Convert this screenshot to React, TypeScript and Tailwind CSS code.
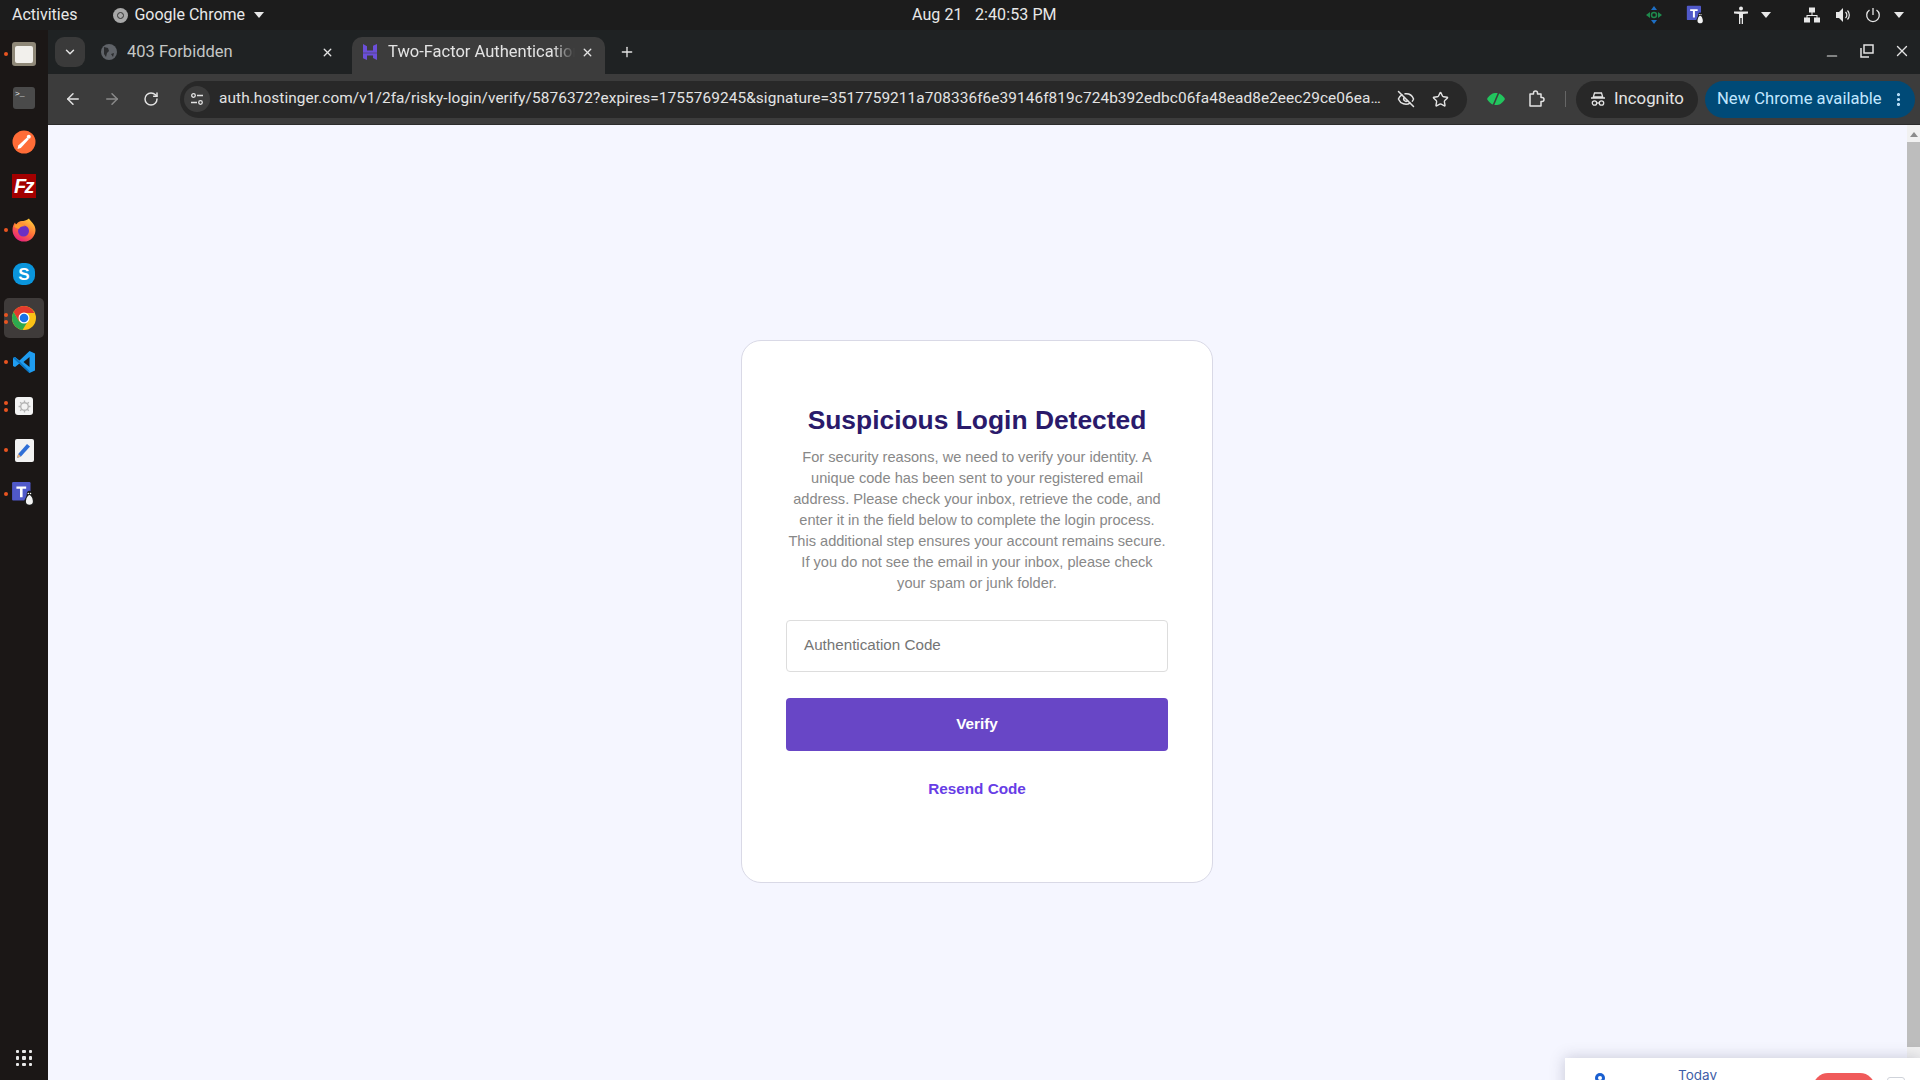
import { ArrowLeft, ArrowRight, ChevronDown, EllipsisVertical, EyeOff, Minus, Plus, RotateCw, Star, X } from "lucide-react";

const ui = "font-['Roboto','Noto_Sans',sans-serif]";

const Caret = ({ className = "" }: { className?: string }) => (
  <span className={`inline-block w-0 h-0 border-x-[5px] border-x-transparent border-t-[6px] border-t-[#e8e8e8] ${className}`} />
);

const HostingerLogo = ({ size = 16 }: { size?: number }) => (
  <svg width={size} height={size} viewBox="0 0 16 16">
    <path d="M1 0l4 2.200V6.400L1 6.400zM11 1.800L15 0v6.400l-4 .4z M1 9.200h14V16l-4-2v-2.400H5V16l-4-1.800z M1 6.400h14v2.400H1z" fill="#6b4fd8" />
  </svg>
);

const TeamsIcon = ({ size = 22 }: { size?: number }) => (
  <svg width={size} height={size} viewBox="0 0 24 24">
    <rect x="1" y="1" width="17" height="17" rx="1" fill="#5059c9" />
    <path d="M5 5h9v2.200h-3.300V15H8.300V7.200H5z" fill="#fff" />
    <path d="M17 9c-2 0-2.600 1.800-2.500 3.600.1 1.400-2.500 4.600-2.500 7 0 1.600 1.400 3 2.800 3h4.600c1.400 0 2.600-1.400 2.600-3 0-2.400-2.400-5.400-2.400-7C19.600 10.800 19 9 17 9z" fill="#1d1d1d" />
    <path d="M17 13c-1.600 0-3.200 3.600-3.200 6.200 0 1.800 1.400 2.800 3.200 2.800s3.200-1 3.200-2.800C20.200 16.600 18.600 13 17 13z" fill="#f4f4f4" />
    <circle cx="16" cy="11.500" r=".7" fill="#fff" />
    <circle cx="18" cy="11.500" r=".7" fill="#fff" />
  </svg>
);

const dockApps = [
  {
    dots: 1,
    icon: (
      <div className="w-[24px] h-[24px] rounded-[3px] bg-[#8f8878] flex items-center justify-center">
        <div className="w-[18px] h-[17px] rounded-[2px] bg-[#f2f0ec]" />
      </div>
    ),
  },
  {
    dots: 0,
    icon: (
      <div className="w-[22px] h-[22px] rounded-[3px] bg-[#4a4a4a] text-[#f0f0f0] text-[8px] leading-[8px] pl-[2px] pt-[3px] font-['Liberation_Mono',monospace]">
        &gt;_
      </div>
    ),
  },
  {
    dots: 0,
    icon: (
      <svg width="24" height="24" viewBox="0 0 24 24">
        <circle cx="12" cy="12" r="11.500" fill="#ff6c37" />
        <path d="M5.500 19l.8-3.500 8.700-8 1.800 1.800-8 8.700z" fill="#fff" />
        <circle cx="16.800" cy="6.800" r="2" fill="#fff" />
      </svg>
    ),
  },
  {
    dots: 0,
    icon: (
      <div className="w-[24px] h-[24px] bg-[#a30000] flex items-center justify-center text-white font-bold italic text-[20px] leading-none tracking-[-1.500px] pr-[1px] font-['Liberation_Sans',sans-serif]">
        Fz
      </div>
    ),
  },
  {
    dots: 1,
    icon: (
      <svg width="24" height="24" viewBox="0 0 24 24">
        <defs>
          <linearGradient id="ff" x1="0.800" y1="0" x2="0.200" y2="1">
            <stop offset="0" stopColor="#ffd23a" />
            <stop offset="0.500" stopColor="#ff7139" />
            <stop offset="1" stopColor="#e31587" />
          </linearGradient>
        </defs>
        <path d="M17 .5c1 2.500 6.500 5.500 6.500 11.500A11.500 11.500 0 0 1 .5 12C.5 9 1.500 6 3 4.500c.3 1 .7 1.500 1.300 2C5.500 4.500 7.500 3 10 3c1.500 0 4.500-.5 7-2.500z" fill="url(#ff)" />
        <circle cx="11.500" cy="13" r="5.500" fill="#6a2fc4" />
        <path d="M2 8c3-3 8-3 11 .5-3-.5-5 .5-6 2.500-2-.5-4-1-5-3z" fill="#ff9a2e" />
      </svg>
    ),
  },
  {
    dots: 0,
    icon: (
      <div className="w-[22px] h-[22px] rounded-[9px] bg-[#0a95dc] flex items-center justify-center text-white font-bold text-[17px] leading-none font-['Liberation_Sans',sans-serif]">
        S
      </div>
    ),
  },
  {
    dots: 2,
    active: true,
    icon: (
      <svg width="24" height="24" viewBox="0 0 24 24">
        <circle cx="12" cy="12" r="12" fill="#fbc116" />
        <path d="M12 0a12 12 0 0 0-10.400 6L7 15.500 12 7h10.400A12 12 0 0 0 12 0z" fill="#e33b2e" />
        <path d="M1.600 6A12 12 0 0 0 10.500 23.900L16 15l-1-1-8 1.500z" fill="#2da94f" />
        <circle cx="12" cy="12" r="5.500" fill="#fff" />
        <circle cx="12" cy="12" r="4.300" fill="#1a73e8" />
      </svg>
    ),
  },
  {
    dots: 1,
    icon: (
      <svg width="24" height="24" viewBox="0 0 24 24">
        <path d="M17.500 1L23 3.500v17L17.500 23 7.500 13.500 3 17l-2-1V8l2-1 4.500 3.500z" fill="#1f9cf0" />
        <path d="M17.500 7l-6 5 6 5z" fill="#1b1716" />
        <path d="M1 8l2-1 14.500 14L17.500 23 13 19z" fill="#0b76c4" />
      </svg>
    ),
  },
  {
    dots: 2,
    icon: (
      <div className="w-[18px] h-[18px] rounded-[3px] bg-[#f3f3f3] flex items-center justify-center">
        <svg width="13" height="13" viewBox="0 0 24 24" fill="none" stroke="#b5b5b5" strokeWidth="2.500">
          <circle cx="12" cy="12" r="7" />
          <path d="M12 1v4M12 19v4M1 12h4M19 12h4M4 4l3 3M17 17l3 3M20 4l-3 3M7 17l-3 3" />
        </svg>
      </div>
    ),
  },
  {
    dots: 1,
    icon: (
      <div className="w-[19px] h-[23px] rounded-[2px] bg-[#f2f2f2] flex items-center justify-center">
        <svg width="16" height="18" viewBox="0 0 16 18">
          <path d="M1 17l1.200-4L11 3l3 2.600L5 15.600z" fill="#2f6fd6" />
          <path d="M1 17l1.200-4 2.800 2.600z" fill="#e8b27a" />
        </svg>
      </div>
    ),
  },
  { dots: 1, icon: <TeamsIcon size={26} /> },
];

const Dock = () => (
  <aside className="w-[48px] shrink-0 bg-[#1b1716] flex flex-col items-center pt-[2px] pb-[4px]">
    {dockApps.map((app, i) => (
      <div key={i} className="relative w-[48px] h-[44px] flex items-center justify-center">
        {app.active && <div className="absolute left-[4px] top-[2px] w-[40px] h-[40px] rounded-[5px] bg-[#3f3b3a]" />}
        <div className="absolute left-[4px] top-0 h-full flex flex-col justify-center gap-[3px]">
          {Array.from({ length: app.dots }).map((_, d) => (
            <span key={d} className="block w-[4px] h-[4px] rounded-full bg-[#e95420]" />
          ))}
        </div>
        <div className="relative">{app.icon}</div>
      </div>
    ))}
    <div className="mt-auto h-[36px] flex items-center justify-center">
      <div className="grid grid-cols-3 gap-[3px]">
        {Array.from({ length: 9 }).map((_, i) => (
          <span key={i} className="block w-[3.500px] h-[3.500px] bg-[#e8e8e8] rounded-[1px]" />
        ))}
      </div>
    </div>
  </aside>
);

const TopBar = () => (
  <header className={`h-[30px] shrink-0 bg-[#1c1c1c] text-[#e8e8e8] text-[16px] flex items-center relative ${ui}`}>
    <span className="ml-[12px]">Activities</span>
    <span className="ml-[36px] flex items-center gap-[6px]">
      <span className="w-[15px] h-[15px] rounded-full bg-[#a8a8a8] flex items-center justify-center">
        <span className="w-[7px] h-[7px] rounded-full border border-[#333]" />
      </span>
      Google Chrome
      <Caret className="ml-[3px]" />
    </span>
    <span className="absolute left-[912px] top-[6px] leading-[18px] tracking-[0.1px] whitespace-pre">Aug 21   2:40:53 PM</span>
    <div className="ml-auto flex items-center">
      <svg width="16" height="18" viewBox="0 0 16 18" className="mr-[24px]">
        <path d="M8 0l3 4H5zM8 18l-3-4h6z" fill="#1e6fc4" />
        <path d="M0 9l4-3v6zM16 9l-4-3v6z" fill="#1f8a4c" />
        <circle cx="8" cy="9" r="2.500" fill="none" stroke="#1f8a4c" strokeWidth="1.500" />
      </svg>
      <TeamsIcon size={20} />
      <svg width="14" height="18" viewBox="0 0 14 18" className="ml-[28px]" fill="#e8e8e8">
        <circle cx="7" cy="2.500" r="2" />
        <path d="M0 5.500h14V7.500L9 8v10H7.700v-6H6.300v6H5V8L0 7.500z" />
      </svg>
      <Caret className="ml-[13px]" />
      <svg width="16" height="16" viewBox="0 0 16 16" className="ml-[33px]" fill="#e8e8e8">
        <rect x="5" y="0.500" width="6" height="5" />
        <rect x="0" y="10.500" width="6" height="5" />
        <rect x="10" y="10.500" width="6" height="5" />
        <path d="M7.500 5h1v3h5v3h-1V9h-9v2h-1V8h5z" />
      </svg>
      <svg width="16" height="16" viewBox="0 0 16 16" className="ml-[15px]" fill="#e8e8e8">
        <path d="M1 5h3l4-4v14l-4-4H1z" />
        <path d="M10.500 5a4 4 0 0 1 0 6M12.500 3.500a6.500 6.500 0 0 1 0 9" fill="none" stroke="#e8e8e8" strokeWidth="1.200" />
      </svg>
      <svg width="16" height="16" viewBox="0 0 16 16" className="ml-[14px]" fill="none" stroke="#e8e8e8" strokeWidth="1.300">
        <path d="M8 1v7M4.500 3a6.300 6.300 0 1 0 7 0" />
      </svg>
      <Caret className="ml-[13px] mr-[16px]" />
    </div>
  </header>
);

const Tab = ({ active, title, icon }: { active?: boolean; title: string; icon: React.ReactNode }) => (
  <div
    className={`h-[37px] pb-[7px] flex items-center shrink-0 ${
      active ? "w-[253px] ml-[9px] bg-[#3c3c3c] rounded-t-[10px] pl-[10px] pr-[11px]" : "w-[248px] ml-[10px] pl-[6px] pr-[9px]"
    }`}
  >
    {icon}
    <span
      className={`ml-[10px] flex-1 overflow-hidden whitespace-nowrap text-[16.500px] ${
        active ? "text-[#e3e3e3] [mask-image:linear-gradient(to_right,black_88%,transparent)]" : "text-[#c4c7c5]"
      }`}
    >
      {title}
    </span>
    <X size={13} strokeWidth={2.500} className="text-[#e3e3e3] ml-[6px] shrink-0" />
  </div>
);

const TabStrip = () => (
  <div className={`h-[44px] shrink-0 bg-[#1f2223] flex items-end ${ui}`}>
    <div className="ml-[7px] mb-[7px] w-[30px] h-[30px] rounded-[9px] bg-[#3a3a3a] flex items-center justify-center">
      <ChevronDown size={14} strokeWidth={2.500} className="text-[#e3e3e3]" />
    </div>
    <Tab
      title="403 Forbidden"
      icon={
        <svg width="16" height="16" viewBox="0 0 16 16" className="shrink-0">
          <circle cx="8" cy="8" r="8" fill="#5f6368" />
          <path d="M3 3l4 1 1 3-2 2-1 4-2-3zM10 10l3-1-1 4z" fill="#2a2c2e" />
        </svg>
      }
    />
    <Tab active title="Two-Factor Authentication" icon={<HostingerLogo />} />
    <div className="ml-[14px] mb-[9px] h-[26px] flex items-center">
      <Plus size={16} strokeWidth={2} className="text-[#e3e3e3]" />
    </div>
    <div className="ml-auto mb-[14px] flex items-center mr-[9px] text-[#e3e3e3]">
      <Minus size={16} strokeWidth={1.800} className="translate-y-[5px]" />
      <svg width="14" height="14" viewBox="0 0 14 14" fill="none" stroke="#e3e3e3" strokeWidth="1.500" className="ml-[20px]">
        <path d="M1 4v9h8" />
        <rect x="4" y="1" width="9" height="8" />
      </svg>
      <X size={18} strokeWidth={1.800} className="ml-[19px]" />
    </div>
  </div>
);

const url =
  "auth.hostinger.com/v1/2fa/risky-login/verify/5876372?expires=1755769245&signature=3517759211a708336f6e39146f819c724b392edbc06fa48ead8e2eec29ce06ea…";

const Toolbar = () => (
  <div className={`h-[51px] shrink-0 bg-[#3c3c3c] border-b border-[#2c2c2c] flex items-center text-[#e3e3e3] ${ui}`}>
    <ArrowLeft size={18} className="ml-[16px] shrink-0" />
    <ArrowRight size={18} className="ml-[21px] shrink-0 text-[#8a8a8a]" />
    <RotateCw size={16} strokeWidth={2.200} className="ml-[22px] shrink-0" />
    <div className="ml-[21px] w-[1287px] h-[37px] shrink-0 rounded-full bg-[#282828] flex items-center">
      <div className="ml-[4px] w-[26px] h-[26px] rounded-full bg-[#3c3c3c] flex items-center justify-center shrink-0">
        <svg width="14" height="14" viewBox="0 0 14 14" fill="none" stroke="#e3e3e3" strokeWidth="1.300">
          <circle cx="3.500" cy="3.500" r="1.800" />
          <path d="M7 3.500h6M1 10.500h6" />
          <circle cx="10.500" cy="10.500" r="1.800" />
        </svg>
      </div>
      <span className="ml-[9px] w-[1164px] overflow-hidden whitespace-nowrap text-[15.400px] tracking-[0.08px] text-[#e3e3e3]">{url}</span>
      <EyeOff size={18} className="ml-[14px] shrink-0" />
      <Star size={17} className="ml-[17px] shrink-0" />
    </div>
    <svg width="18" height="16" viewBox="0 0 18 16" className="ml-[20px] shrink-0">
      <path d="M0 8c3-5 6-6 9-6s6 1 9 6c-3 5-6 6-9 6S3 13 0 8z" fill="#22c55e" />
      <path d="M12 1L6 15" stroke="#3c3c3c" strokeWidth="1.600" />
    </svg>
    <svg width="18" height="18" viewBox="0 0 18 18" fill="none" stroke="#e3e3e3" strokeWidth="1.500" className="ml-[22px] shrink-0">
      <path d="M3 4h3.500V3a2 2 0 0 1 4 0v1H14v3.500h1a2 2 0 0 1 0 4h-1V16H3z" strokeLinejoin="round" />
    </svg>
    <span className="ml-[20px] w-px h-[16px] bg-[#666] shrink-0" />
    <div className="ml-[10px] w-[122px] h-[37px] shrink-0 rounded-full bg-[#282828] flex items-center pl-[14px] text-[16.800px]">
      <svg width="16" height="16" viewBox="0 0 16 16" fill="none" stroke="#e3e3e3" strokeWidth="1.300" className="shrink-0">
        <path d="M4.500 2h7l1.200 4H3.300zM1 7h14" />
        <circle cx="4.500" cy="12" r="2.200" />
        <circle cx="11.500" cy="12" r="2.200" />
        <path d="M6.700 12h2.600" />
      </svg>
      <span className="ml-[8px]">Incognito</span>
    </div>
    <div className="ml-[7px] w-[210px] h-[37px] shrink-0 rounded-full bg-[#004a77] flex items-center pl-[12px] text-[16.600px] text-[#c2e7ff] whitespace-nowrap">
      New Chrome available
      <EllipsisVertical size={17} strokeWidth={2.500} className="ml-auto mr-[8px]" />
    </div>
  </div>
);

const LoginCard = () => (
  <div className="w-[472px] h-[543px] bg-white border border-[#d9d9e6] rounded-[20px] px-[44px] pt-[62px] text-center">
    <h1 className="text-[26.400px] leading-[35px] font-bold text-[#2a1a6b]">Suspicious Login Detected</h1>
    <p className="mt-[9px] text-[14.600px] leading-[21px] text-[#888888]">
      For security reasons, we need to verify your identity. A unique code has been sent to your registered email address. Please check your inbox,
      retrieve the code, and enter it in the field below to complete the login process. This additional step ensures your account remains secure. If
      you do not see the email in your inbox, please check your spam or junk folder.
    </p>
    <div className="mt-[26px] h-[52px] border border-[#dddddd] rounded-[4px] pl-[17px] pb-[2px] flex items-center text-left text-[15.200px] text-[#757575]">
      Authentication Code
    </div>
    <button className="mt-[26px] block w-full h-[53px] bg-[#6846c6] rounded-[4px] text-white text-[15.300px] font-bold">Verify</button>
    <div className="mt-[28px] text-[15.300px] leading-[20px] font-bold text-[#673de6]">Resend Code</div>
  </div>
);

const Scrollbar = () => (
  <div className="w-[13px] shrink-0 bg-[#f1f1f1] flex flex-col items-center">
    <span className="mt-[7px] w-0 h-0 border-x-[4px] border-x-transparent border-b-[5px] border-b-[#8c8c8c]" />
    <div className="mt-[5px] w-full h-[905px] bg-[#bdbdbd]" />
  </div>
);

const PromoWidget = () => (
  <div className="absolute left-[1565px] top-[1058px] w-[355px] h-[60px] bg-white shadow-[0_0_14px_rgba(60,60,90,0.25)] font-['Inter',sans-serif]">
    <svg width="12" height="16" viewBox="0 0 12 16" className="absolute left-[29px] top-[15px]">
      <path d="M6 0a5 5 0 0 1 5 5c0 3-5 11-5 11S1 8 1 5a5 5 0 0 1 5-5z" fill="#1a5fd0" />
      <circle cx="6" cy="5" r="2" fill="#fff" />
    </svg>
    <span className="absolute left-[113px] top-[8px] text-[13.500px] leading-[18px] text-[#3f5fa8]">Today</span>
    <div className="absolute left-[248px] top-[15px] w-[62px] h-[30px] rounded-[15px] bg-[#f05a5a]" />
    <div className="absolute left-[322px] top-[19px] w-[18px] h-[18px] rounded-[3px] border border-[#cfd3da]" />
  </div>
);

export default function App() {
  return (
    <div className="relative h-screen w-[1920px] flex flex-col overflow-hidden font-['Liberation_Sans',sans-serif]">
      <TopBar />
      <div className="flex-1 flex min-h-0">
        <Dock />
        <div className="flex-1 flex flex-col min-w-0">
          <TabStrip />
          <Toolbar />
          <div className="flex-1 flex min-h-0">
            <main className="flex-1 bg-[#f5f6ff] flex justify-center pt-[215px] pr-[1px]">
              <LoginCard />
            </main>
            <Scrollbar />
          </div>
        </div>
      </div>
      <PromoWidget />
    </div>
  );
}
